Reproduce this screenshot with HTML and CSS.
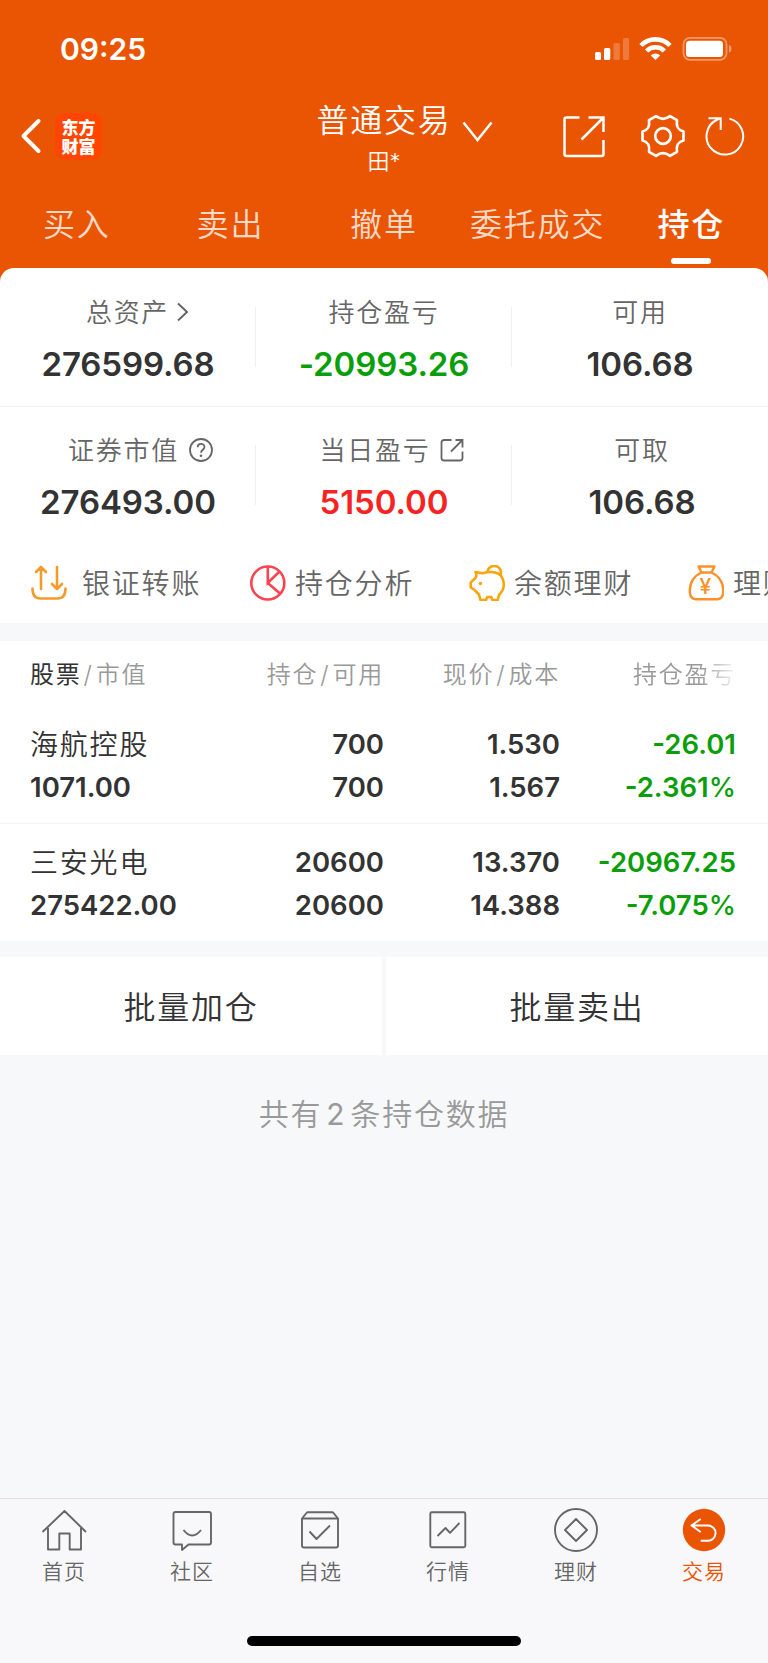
FILE: index.html
```html
<!DOCTYPE html>
<html lang="zh-CN">
  <head>
    <meta charset="UTF-8" />
    <meta name="viewport" content="width=device-width, initial-scale=1.0" />
    <title>普通交易 - 持仓</title>
    <link rel="stylesheet" href="styles.css">
  </head>

  <body>
    <div class="top">
      <div class="status-bar">
        <span class="time">09:25</span>
        <svg width="138" height="26" viewBox="0 0 138 26" fill="#fff">
          <rect x="0" y="16" width="6" height="8" rx="1.5" />
          <rect x="9" y="12" width="6.3" height="12" rx="1.5" />
          <rect x="18.5" y="7" width="6.3" height="17" rx="1.5" opacity="0.22" />
          <rect x="28" y="2" width="6" height="22" rx="1.5" opacity="0.22" />
          <path d="M46 9.500A20.300 20.300 0 0 1 75 9.500M51.600 15A12.500 12.500 0 0 1 69.400 15" fill="none" stroke="#fff" stroke-width="4.600" />
          <path d="M60.500 24l-4.700-4.500a6.700 6.700 0 0 1 9.400 0z" />
          <rect x="88.500" y="1.800" width="43" height="22" rx="6.500" fill="none" stroke="#fff" stroke-width="1.800" opacity="0.4" />
          <rect x="91" y="4.800" width="37" height="16.200" rx="3.500" />
          <path d="M134 9c3.300 1 3.300 6.500 0 7.500z" opacity="0.45" />
        </svg>
      </div>

      <div class="nav">
        <div class="nav-left">
          <svg width="22" height="40" viewBox="0 0 22 40" fill="none" stroke="#fff" stroke-width="4" stroke-linecap="round" stroke-linejoin="round">
            <path d="M18.500 5L3.500 20l15 15" />
          </svg>
          <div class="logo"><span>东方</span><span>财富</span></div>
        </div>
        <div class="nav-title">
          <h1>普通交易</h1>
          <p>田*</p>
        </div>
        <div class="nav-right">
          <svg class="arrow-down" width="32" height="48" viewBox="0 0 32 48" fill="none" stroke="#fff" stroke-width="2.500">
            <path d="M1.500 10.500L15.500 28l14-17.500" />
          </svg>
          <svg class="share" width="44" height="48" viewBox="0 0 44 48" fill="none" stroke="#fff" stroke-width="2.500">
            <path d="M17.500 5.500h-13a2 2 0 0 0-2 2V42a2 2 0 0 0 2 2H39.500a2 2 0 0 0 2-2V28M26.500 5.500h15V20M19.500 27.500L41 6" />
          </svg>
          <svg class="gear" width="44" height="48" viewBox="-22 -24 44 48" fill="none" stroke="#fff" stroke-width="2.700" stroke-linejoin="round">
            <path d="M-7-19.800Q0-14.500 7-19.800L14-15.800C13-9 15-6 20.500-4.500V4.500C15 6 13 9 14 15.800L7 19.800Q0 14.500-7 19.800L-14 15.800C-13 9-15 6-20.500 4.500V-4.500C-15-6-13-9-14-15.800z" />
            <circle r="7.800" />
          </svg>
          <svg class="refresh" width="40" height="48" viewBox="0 0 40 48" fill="none" stroke="#fff" stroke-width="2">
            <path d="M24.500 6.600A18.300 18.300 0 1 1 11.500 8L15.700 6.200M3.500 6.200H15.700V18" />
          </svg>
        </div>
      </div>

      <div class="tabs">
        <a>买入</a>
        <a>卖出</a>
        <a>撤单</a>
        <a>委托成交</a>
        <a class="active">持仓</a>
      </div>

      <div class="summary">
        <div class="summary-row">
          <div class="cell">
            <p class="label narrow">总资产
              <svg width="14" height="24" viewBox="0 0 14 24" fill="none" stroke="#666" stroke-width="2"><path d="M2 3.500l9 8.500L2 20.500" /></svg>
            </p>
            <p class="value">276599.68</p>
          </div>
          <div class="cell">
            <p class="label">持仓盈亏</p>
            <p class="value green">-20993.26</p>
          </div>
          <div class="cell">
            <p class="label">可用</p>
            <p class="value">106.68</p>
          </div>
        </div>
        <div class="summary-row">
          <div class="cell">
            <p class="label wide">证券市值
              <svg width="24" height="24" viewBox="0 0 24 24" fill="none" stroke="#666" stroke-width="1.800">
                <circle cx="12" cy="12" r="11" />
                <path d="M8.700 9.300c0-4.600 6.800-4.400 6.800-.3 0 2.800-3.500 2.800-3.500 5.700" />
                <circle cx="12" cy="17.800" r="1.300" fill="#666" stroke="none" />
              </svg>
            </p>
            <p class="value">276493.00</p>
          </div>
          <div class="cell">
            <p class="label today">当日盈亏
              <svg width="24" height="24" viewBox="0 0 24 24" fill="none" stroke="#666" stroke-width="1.800">
                <path d="M11.500 2H4a2.500 2.500 0 0 0-2.500 2.500v15.500a2.500 2.500 0 0 0 2.500 2.500h16a2.500 2.500 0 0 0 2.500-2.500V13.500M15.500 2h7v7.500M11 13.500L22.500 2" />
              </svg>
            </p>
            <p class="value red">5150.00</p>
          </div>
          <div class="cell last">
            <p class="label">可取</p>
            <p class="value">106.68</p>
          </div>
        </div>
      </div>
    </div>

    <div class="shortcuts">
      <a class="shortcut first">
        <svg width="36" height="36" viewBox="0 0 36 36" fill="none" stroke="#f39c2d" stroke-width="2.600" stroke-linecap="round" stroke-linejoin="round">
          <path d="M10 24V2M5 7l5-5 5 5M26 2v22M21 19l5 5 5-5M1.500 23.500c0 6 2.500 10 8 10h17c5.500 0 8-4 8-10" />
        </svg>
        银证转账
      </a>
      <a class="shortcut">
        <svg width="36" height="36" viewBox="0 0 36 36" fill="none" stroke="#fb4450" stroke-width="2.600">
          <circle cx="17.800" cy="18" r="16.500" />
          <path d="M17.800 1.500V18L29 7M17.800 18L30 28.500" />
        </svg>
        持仓分析
      </a>
      <a class="shortcut">
        <svg width="36" height="36" viewBox="0 0 36 36" fill="none" stroke="#fba50a" stroke-width="2.600" stroke-linejoin="round">
          <path d="M6.500 7l6.800 1.300c5-1.500 12-2 16.700.7 4 3 5 7 4.700 12-.3 4-2.200 6.500-4.700 9l-1.200 5h-5.500l-1-3h-4l-1.300 3h-5.500l-1.500-5.500-4.500-4.500-3.800-2.500v-5l4.800-4.500c1.200-2 1-4 0-6z" />
          <path d="M18.500 7C19.500-.5 29-1 31.500 5c.7 2 .5 4-.5 5.500" />
          <circle cx="11.500" cy="18.500" r="1.700" fill="#fba50a" stroke="none" />
        </svg>
        余额理财
      </a>
      <a class="shortcut">
        <svg width="36" height="36" viewBox="0 0 36 36" fill="none" stroke="#fb9127" stroke-width="2.400" stroke-linejoin="round">
          <path d="M10.500 1.500h16l-3 6h-10zM13.500 7.500C6 11 1.800 18 1.800 26c0 5 1.700 8.200 6 8.200h21.500c4.300 0 6-3.200 6-8.200 0-8-4.300-15-11.800-18.500" />
          <text class="yen" x="18.300" y="29" text-anchor="middle">¥</text>
        </svg>
        理财
      </a>
    </div>

    <div class="holdings">
      <div class="holdings-head">
        <span><b>股票</b><i>/</i>市值</span>
        <span>持仓<i>/</i>可用</span>
        <span>现价<i>/</i>成本</span>
        <span class="fade">持仓盈亏</span>
      </div>
      <div class="stock">
        <div><span class="name">海航控股</span><span>1071.00</span></div>
        <div><span>700</span><span>700</span></div>
        <div><span>1.530</span><span>1.567</span></div>
        <div class="green"><span>-26.01</span><span>-2.361<em>%</em></span></div>
      </div>
      <div class="stock">
        <div><span class="name">三安光电</span><span>275422.00</span></div>
        <div><span>20600</span><span>20600</span></div>
        <div><span>13.370</span><span>14.388</span></div>
        <div class="green"><span>-20967.25</span><span>-7.075<em>%</em></span></div>
      </div>
    </div>

    <div class="batch">
      <button>批量加仓</button>
      <button>批量卖出</button>
    </div>

    <p class="total">共有<span>2</span>条持仓数据</p>

    <div class="tab-bar">
      <div class="tab-items">
        <a>
          <svg width="48" height="48" viewBox="0 0 48 48">
            <path d="M2.500 27L24.500 6L46 27M8 23v21.500h11.300v-16h10.400v16H41V23" />
          </svg>
          首页
        </a>
        <a>
          <svg width="48" height="48" viewBox="0 0 48 48">
            <path d="M7.500 7H41a2 2 0 0 1 2 2v28.500a2 2 0 0 1-2 2H20.500L14 45v-5.500H7.500a2 2 0 0 1-2-2V9a2 2 0 0 1 2-2zM15.500 25q8.700 11 17.500 0" />
          </svg>
          社区
        </a>
        <a>
          <svg width="48" height="48" viewBox="0 0 48 48">
            <path d="M6 13.500h36V40.500a2 2 0 0 1-2 2H8a2 2 0 0 1-2-2zl4.500-5.500a1.500 1.500 0 0 1 1-.7h25a1.500 1.500 0 0 1 1 .7L42 13.500M13.500 26.500l7 7.500L34 20.500" />
          </svg>
          自选
        </a>
        <a>
          <svg width="48" height="48" viewBox="0 0 48 48">
            <rect x="6.300" y="7.200" width="35" height="35" rx="1.500" />
            <path d="M13.500 31l8-8 4.500 4.800L35.500 18" />
          </svg>
          行情
        </a>
        <a>
          <svg width="48" height="48" viewBox="0 0 48 48">
            <circle cx="24" cy="25" r="21" />
            <path d="M24 14L35 25L24 36L13 25z" />
          </svg>
          理财
        </a>
        <a class="active">
          <svg width="48" height="48" viewBox="0 0 48 48">
            <circle class="dot" cx="24" cy="25" r="21.200" />
            <path d="M20.700 14L11.500 20.500L20.700 27M11.500 20.500H28a7.600 7.600 0 0 1 0 15.200H20.700" />
          </svg>
          交易
        </a>
      </div>
      <div class="home-indicator"></div>
    </div>
  </body>
</html>
```
FILE: styles.css
```css
* {
  margin: 0;
  padding: 0;
  box-sizing: border-box;
}

body {
  width: 768px;
  height: 1663px;
  display: flex;
  flex-direction: column;
  background: #f7f8fa;
  color: #333;
  font-family: Inter, "Noto Sans CJK SC", sans-serif;
  font-weight: 350;
  overflow: hidden;
}

svg {
  display: block;
  flex: none;
}

.top {
  background: #ea5504;
  color: #fff;
}

/* status bar */
.status-bar {
  height: 100px;
  padding: 0 35px 2px 60px;
  display: flex;
  justify-content: space-between;
  align-items: center;
}

.time {
  font-size: 30px;
  font-weight: 600;
}

/* title */
.nav {
  height: 86px;
  display: grid;
  grid-template-columns: 1fr 136px 1fr;
}

.nav-left {
  display: flex;
  align-items: center;
  gap: 13px;
  height: 72px;
  padding-left: 20px;
}

.logo {
  width: 47px;
  height: 47px;
  border-radius: 10px;
  background: #ff4500;
  display: flex;
  flex-direction: column;
  align-items: center;
  justify-content: center;
  font-family: "Noto Sans CJK SC", sans-serif;
  font-size: 17px;
  font-weight: 900;
  line-height: 19px;
}

.nav-title {
  padding-top: 1px;
  text-align: center;
}

.nav-title h1 {
  font-size: 32px;
  font-weight: 350;
  line-height: 40px;
  letter-spacing: 1.8px;
  white-space: nowrap;
}

.nav-title p {
  font-size: 22px;
  line-height: 40px;
}

.nav-right {
  display: flex;
  align-items: center;
  height: 72px;
}

.arrow-down {
  margin-left: 10px;
}

.share {
  margin-left: 68px;
}

.gear {
  margin-left: 35px;
}

.refresh {
  margin-left: 20px;
}

/* trade tabs */
.tabs {
  height: 82px;
  display: grid;
  grid-template-columns: repeat(5, 1fr);
}

.tabs a {
  display: flex;
  flex-direction: column;
  align-items: center;
  font-size: 32px;
  line-height: 78px;
  letter-spacing: 1.8px;
  color: rgba(255, 255, 255, 0.8);
}

.tabs .active {
  color: #fff;
  font-weight: 500;
}

.tabs .active::after {
  content: "";
  width: 40px;
  height: 6px;
  margin-top: -6px;
  border-radius: 3px;
  background: #fff;
}

/* assets */
.summary {
  background: #fff;
  border-radius: 14px 14px 0 0;
  color: #333;
}

.summary-row {
  height: 138px;
  padding-top: 24px;
  display: grid;
  grid-template-columns: repeat(3, 1fr);
}

.summary-row + .summary-row {
  border-top: 1px solid #f0f0f2;
  padding-top: 23px;
}

.cell {
  text-align: center;
  background: linear-gradient(#f0f0f2, #f0f0f2) no-repeat right 15px / 1px 60px;
}

.cell:last-child {
  background: none;
}

.cell.last {
  padding-left: 4px;
}

.label {
  display: flex;
  justify-content: center;
  align-items: center;
  gap: 7px;
  height: 36px;
  font-size: 26px;
  letter-spacing: 1.7px;
  color: #666;
}

.label svg {
  margin-top: 3px;
}

.label.narrow {
  padding-left: 20px;
}

.label.wide {
  gap: 10px;
  padding-left: 25px;
}

.label.today {
  gap: 10px;
  padding-left: 16px;
}

.value {
  margin-top: 14px;
  font-size: 33px;
  font-weight: 600;
  line-height: 44px;
  letter-spacing: -0.1px;
}

.green {
  color: #0a9f0a;
}

.red {
  color: #f62323;
}

/* shortcuts */
.shortcuts {
  height: 79px;
  padding: 0 0 3px 31px;
  display: flex;
  align-items: center;
  background: #fff;
  overflow: hidden;
}

.shortcut {
  flex: none;
  width: 219px;
  display: flex;
  align-items: center;
  gap: 9px;
  font-size: 28px;
  letter-spacing: 1.8px;
  color: #666;
}

.shortcut svg {
  margin-top: 2px;
}

.shortcut.first {
  gap: 15px;
}

.yen {
  font-family: Inter, sans-serif;
  font-size: 21px;
  font-weight: 500;
  fill: #fb9127;
  stroke: none;
}

/* holdings */
.holdings {
  margin-top: 18px;
  background: #fff;
}

.holdings-head,
.stock {
  padding: 0 32px 0 30px;
  display: grid;
  grid-template-columns: 178px repeat(3, 176px);
  text-align: right;
}

.holdings-head {
  height: 64px;
  line-height: 68px;
  font-size: 24px;
  letter-spacing: 1.8px;
  color: #999;
}

.holdings-head span:first-child,
.stock div:first-child {
  text-align: left;
}

.holdings-head b {
  font-weight: 400;
  color: #333;
}

.holdings-head i {
  margin: 0 2px;
  font-style: normal;
}

.holdings-head .fade {
  padding-left: 73px;
  text-align: left;
  white-space: nowrap;
  overflow: hidden;
  -webkit-mask-image: linear-gradient(to right, #000 80%, transparent 102%);
  mask-image: linear-gradient(to right, #000 80%, transparent 102%);
}

.stock {
  height: 118px;
  padding-top: 18px;
}

.stock + .stock {
  border-top: 1px solid #f4f4f6;
  padding-top: 17px;
}

.stock span {
  display: block;
  height: 43px;
  font-size: 27.5px;
  font-weight: 600;
  line-height: 43px;
}

.stock em {
  font-style: normal;
  font-weight: 500;
}

.stock .name {
  font-size: 28px;
  font-weight: 350;
  line-height: 45px;
  letter-spacing: 1.8px;
}

/* batch buttons */
.batch {
  margin-top: 16px;
  display: grid;
  grid-template-columns: 1fr 1fr;
  gap: 4px;
}

.batch button {
  height: 98px;
  padding-bottom: 2px;
  border: none;
  background: #fff;
  color: #333;
  font-family: inherit;
  font-size: 32px;
  font-weight: 350;
  letter-spacing: 1.8px;
}

.total {
  margin-top: 36px;
  text-align: center;
  font-size: 30px;
  line-height: 46px;
  letter-spacing: 1.8px;
  color: #999;
}

.total span {
  margin: 0 4px;
  font-weight: 400;
}

/* bottom bar */
.tab-bar {
  margin-top: auto;
  height: 165px;
  padding-top: 6px;
  border-top: 1px solid #dedee0;
  background: #f8f8fa;
}

.tab-items {
  display: grid;
  grid-template-columns: repeat(6, 1fr);
}

.tab-items a {
  display: flex;
  flex-direction: column;
  align-items: center;
  font-size: 21px;
  line-height: 37px;
  letter-spacing: 1px;
  color: #666;
}

.tab-items svg {
  fill: none;
  stroke: #666;
  stroke-width: 1.9;
  stroke-linejoin: round;
}

.tab-items .active {
  color: #ea5504;
}

.tab-items .active svg {
  stroke: #fff;
}

.tab-items .dot {
  fill: #ea5504;
  stroke: none;
}

.home-indicator {
  width: 274px;
  height: 10px;
  margin: 46px auto 0;
  border-radius: 5px;
  background: #000;
}
```
